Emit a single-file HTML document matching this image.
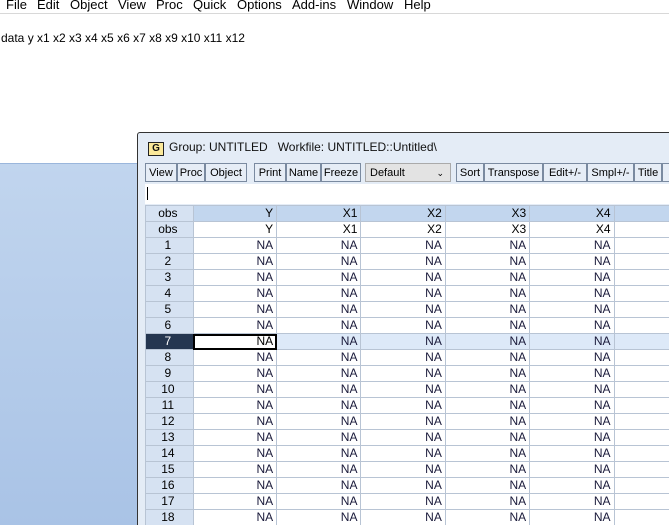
<!DOCTYPE html><html><head><style>
html,body{margin:0;width:669px;height:525px;overflow:hidden}
body{position:relative;background:#fff;font-family:"Liberation Sans",sans-serif;}
.menu{position:absolute;left:0;top:-6px;width:669px;height:19px;background:#fff;font-size:13px;border-bottom:1px solid #d8d8d8}
.menu span{position:absolute;top:3px}
.blue{position:absolute;left:0;top:163px;width:669px;height:362px;background:linear-gradient(#c1d5ee,#a9c3e6);border-top:1px solid #9ab6dc}
.win{position:absolute;left:137px;top:132px;width:540px;height:400px;background:#e4ecf6;border:1px solid #333;border-radius:3px 0 0 0}
.title{position:absolute;left:10px;top:7px;font-size:12px;color:#111}
.g{display:inline-block;width:14px;height:12px;background:#fbe99a;border:1px solid #222;font-weight:bold;font-size:10px;text-align:center;line-height:12px;margin-right:5px}
.tb{position:absolute;top:30px;height:20px}
.btn{position:absolute;top:0;height:19px;border:1px solid #7a8aa0;background:#e6edf6;font-size:11px;line-height:19px;text-align:center;box-sizing:border-box}
.edit{position:absolute;left:7px;top:51px;width:540px;height:20px;background:#fff}
table{position:absolute;left:7px;top:72px;border-collapse:collapse;font-size:12px}
td{height:15px;padding:0 3px 0 0;border:1px solid #b8c4d4;text-align:right;line-height:15px;color:#000;background:#fff}
td.o{background:#d6e2f2;text-align:center;width:44px}
tr.h td{background:#c2d6ee}
tr.h td.o{background:#d6e2f2}
td.na{color:#1a1a3a}
tr.sel td{background:#dde9f8}
tr.sel td.o{background:#253650;color:#fff}
tr.sel td.c{background:#fff;outline:2px solid #000;outline-offset:-2px}
</style></head><body>
<div class="menu"><span style="left:6px">File</span><span style="left:37px">Edit</span><span style="left:70px">Object</span><span style="left:118px">View</span><span style="left:156px">Proc</span><span style="left:193px">Quick</span><span style="left:237px">Options</span><span style="left:292px">Add-ins</span><span style="left:347px">Window</span><span style="left:404px">Help</span></div>
<div style="position:absolute;left:1px;top:31px;font-size:12px">data y x1 x2 x3 x4 x5 x6 x7 x8 x9 x10 x11 x12</div>
<div class="blue"></div>
<div class="win">
<div class="title"><span class="g">G</span>Group: UNTITLED &nbsp; Workfile: UNTITLED::Untitled\</div>
<div class="tb">
<div class="btn" style="left:7px;width:32px">View</div><div class="btn" style="left:39px;width:28px">Proc</div><div class="btn" style="left:67px;width:42px">Object</div>
<div class="btn" style="left:116px;width:32px">Print</div><div class="btn" style="left:148px;width:35px">Name</div><div class="btn" style="left:183px;width:40px">Freeze</div>
<div class="btn" style="left:227px;width:86px;text-align:left;padding-left:4px;background:#e3e3e3;border-color:#aaa">Default<span style="position:absolute;right:6px;font-size:9px">&#8964;</span></div>
<div class="btn" style="left:318px;width:28px">Sort</div><div class="btn" style="left:346px;width:59px">Transpose</div><div class="btn" style="left:405px;width:44px">Edit+/-</div><div class="btn" style="left:449px;width:47px">Smpl+/-</div><div class="btn" style="left:496px;width:28px">Title</div><div class="btn" style="left:524px;width:20px">S</div>
</div>
<div class="edit"><div style="position:absolute;left:2px;top:3px;width:1px;height:13px;background:#000"></div></div>
<table>
<tr class="h"><td class="o">obs</td><td style="width:80px">Y</td><td style="width:81px">X1</td><td style="width:81px">X2</td><td style="width:81px">X3</td><td style="width:81px">X4</td><td style="width:60px"></td></tr>
<tr><td class="o">obs</td><td>Y</td><td>X1</td><td>X2</td><td>X3</td><td>X4</td><td></td></tr>
<tr><td class="o">1</td><td class="na">NA</td><td class="na">NA</td><td class="na">NA</td><td class="na">NA</td><td class="na">NA</td><td></td></tr>
<tr><td class="o">2</td><td class="na">NA</td><td class="na">NA</td><td class="na">NA</td><td class="na">NA</td><td class="na">NA</td><td></td></tr>
<tr><td class="o">3</td><td class="na">NA</td><td class="na">NA</td><td class="na">NA</td><td class="na">NA</td><td class="na">NA</td><td></td></tr>
<tr><td class="o">4</td><td class="na">NA</td><td class="na">NA</td><td class="na">NA</td><td class="na">NA</td><td class="na">NA</td><td></td></tr>
<tr><td class="o">5</td><td class="na">NA</td><td class="na">NA</td><td class="na">NA</td><td class="na">NA</td><td class="na">NA</td><td></td></tr>
<tr><td class="o">6</td><td class="na">NA</td><td class="na">NA</td><td class="na">NA</td><td class="na">NA</td><td class="na">NA</td><td></td></tr>
<tr class="sel"><td class="o">7</td><td class="c">NA</td><td class="na">NA</td><td class="na">NA</td><td class="na">NA</td><td class="na">NA</td><td></td></tr>
<tr><td class="o">8</td><td class="na">NA</td><td class="na">NA</td><td class="na">NA</td><td class="na">NA</td><td class="na">NA</td><td></td></tr>
<tr><td class="o">9</td><td class="na">NA</td><td class="na">NA</td><td class="na">NA</td><td class="na">NA</td><td class="na">NA</td><td></td></tr>
<tr><td class="o">10</td><td class="na">NA</td><td class="na">NA</td><td class="na">NA</td><td class="na">NA</td><td class="na">NA</td><td></td></tr>
<tr><td class="o">11</td><td class="na">NA</td><td class="na">NA</td><td class="na">NA</td><td class="na">NA</td><td class="na">NA</td><td></td></tr>
<tr><td class="o">12</td><td class="na">NA</td><td class="na">NA</td><td class="na">NA</td><td class="na">NA</td><td class="na">NA</td><td></td></tr>
<tr><td class="o">13</td><td class="na">NA</td><td class="na">NA</td><td class="na">NA</td><td class="na">NA</td><td class="na">NA</td><td></td></tr>
<tr><td class="o">14</td><td class="na">NA</td><td class="na">NA</td><td class="na">NA</td><td class="na">NA</td><td class="na">NA</td><td></td></tr>
<tr><td class="o">15</td><td class="na">NA</td><td class="na">NA</td><td class="na">NA</td><td class="na">NA</td><td class="na">NA</td><td></td></tr>
<tr><td class="o">16</td><td class="na">NA</td><td class="na">NA</td><td class="na">NA</td><td class="na">NA</td><td class="na">NA</td><td></td></tr>
<tr><td class="o">17</td><td class="na">NA</td><td class="na">NA</td><td class="na">NA</td><td class="na">NA</td><td class="na">NA</td><td></td></tr>
<tr><td class="o">18</td><td class="na">NA</td><td class="na">NA</td><td class="na">NA</td><td class="na">NA</td><td class="na">NA</td><td></td></tr>
</table>
</div>
</body></html>
